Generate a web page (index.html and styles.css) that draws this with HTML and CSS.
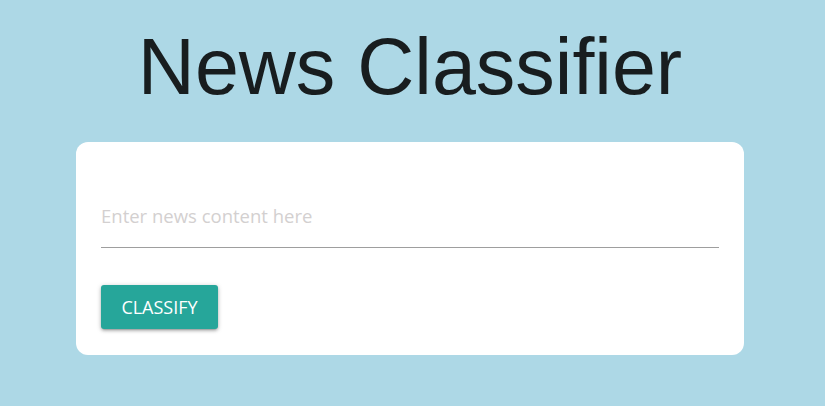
FILE: index.html
```html
<!DOCTYPE html>
<html>
<head>
<meta charset="utf-8">
<link rel="stylesheet" href="styles.css">
</head>
<body>
<div class="page">
  <h1 class="title">News Classifier</h1>
  <div class="card">
    <input class="news-input" type="text" placeholder="Enter news content here">
    <button class="btn">CLASSIFY</button>
  </div>
</div>
</body>
</html>
```
FILE: styles.css
```css
html, body {
  margin: 0;
  padding: 0;
  background: #add8e6;
}
.page {
  width: 820px;
  display: flex;
  flex-direction: column;
  align-items: center;
}
.title {
  margin: 22px 0 0 0;
  font-family: "Liberation Sans", Arial, sans-serif;
  font-weight: normal;
  font-size: 79px;
  line-height: 89px;
  color: #181d1f;
}
.card {
  margin-top: 31px;
  width: 668px;
  box-sizing: border-box;
  background: #fff;
  border-radius: 12px;
  padding: 42px 25px 26px 25px;
  display: flex;
  flex-direction: column;
  align-items: flex-start;
}
.news-input {
  width: 100%;
  box-sizing: border-box;
  height: 64px;
  padding: 0;
  margin: 0;
  border: none;
  border-bottom: 1px solid #9e9e9e;
  outline: none;
  background: transparent;
  font-family: "Open Sans", "Noto Sans", sans-serif;
  font-size: 18.5px;
  color: #333;
}
.news-input::placeholder {
  color: #d3d0d0;
}
.btn {
  margin-top: 37px;
  width: 117px;
  height: 44px;
  border: none;
  border-radius: 3px;
  background: #26a69a;
  color: #fff;
  font-family: "Open Sans", "Noto Sans", sans-serif;
  font-size: 18px;
  padding: 0;
  box-shadow: 0 2px 3px 0 rgba(0,0,0,.16), 0 3px 1px -2px rgba(0,0,0,.12), 0 1px 5px 0 rgba(0,0,0,.22);
}
```
